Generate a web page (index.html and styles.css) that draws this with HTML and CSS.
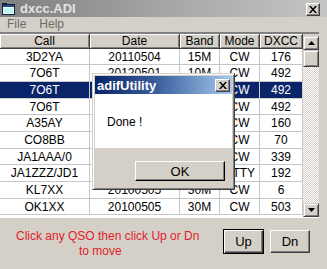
FILE: index.html
```html
<!DOCTYPE html>
<html>
<head>
<meta charset="utf-8">
<link rel="stylesheet" href="styles.css">
</head>
<body>
<div class="window">
  <div class="titlebar">
    <svg class="app-icon" width="13" height="12" viewBox="0 0 13 12">
      <rect x="0.5" y="1.5" width="12" height="10" fill="#e8ffff" stroke="#102040"/>
      <rect x="1" y="2" width="11" height="2" fill="#2a4a7a"/>
      <rect x="0" y="0" width="5" height="2" fill="#102040"/>
      <rect x="2" y="5" width="9" height="5" fill="#bff4f4"/>
    </svg>
    <span class="title">dxcc.ADI</span>
    <span class="win-btn tb-close">
      <svg width="8" height="7" viewBox="0 0 8 7"><path d="M0 0h2l2 2.5L6 0h2L5 3.5 8 7H6L4 4.5 2 7H0l3-3.5z" fill="#000"/></svg>
    </span>
  </div>
  <div class="menubar">
    <span class="menu-item">File</span>
    <span class="menu-item">Help</span>
  </div>
  <div class="gridarea">
    <div class="grid">
      <div class="row head">
        <div class="cell">Call</div><div class="cell">Date</div><div class="cell">Band</div><div class="cell">Mode</div><div class="cell">DXCC</div>
      </div>
      <div class="row"><div class="cell">3D2YA</div><div class="cell">20110504</div><div class="cell">15M</div><div class="cell">CW</div><div class="cell">176</div></div>
      <div class="row"><div class="cell">7O6T</div><div class="cell">20120501</div><div class="cell">10M</div><div class="cell">CW</div><div class="cell">492</div></div>
      <div class="row selected"><div class="cell">7O6T</div><div class="cell">20120501</div><div class="cell">12M</div><div class="cell">CW</div><div class="cell">492</div></div>
      <div class="row"><div class="cell">7O6T</div><div class="cell">20120502</div><div class="cell">15M</div><div class="cell">CW</div><div class="cell">492</div></div>
      <div class="row"><div class="cell">A35AY</div><div class="cell">20110420</div><div class="cell">20M</div><div class="cell">CW</div><div class="cell">160</div></div>
      <div class="row"><div class="cell">CO8BB</div><div class="cell">20100312</div><div class="cell">40M</div><div class="cell">CW</div><div class="cell">70</div></div>
      <div class="row"><div class="cell">JA1AAA/0</div><div class="cell">20100505</div><div class="cell">30M</div><div class="cell">CW</div><div class="cell">339</div></div>
      <div class="row"><div class="cell">JA1ZZZ/JD1</div><div class="cell">20100505</div><div class="cell">20M</div><div class="cell">RTTY</div><div class="cell">192</div></div>
      <div class="row"><div class="cell">KL7XX</div><div class="cell">20100505</div><div class="cell">30M</div><div class="cell">CW</div><div class="cell">6</div></div>
      <div class="row"><div class="cell">OK1XX</div><div class="cell">20100505</div><div class="cell">30M</div><div class="cell">CW</div><div class="cell">503</div></div>
    </div>
    <div class="scrollbar">
      <div class="sb-btn"><svg width="7" height="4" viewBox="0 0 7 4"><path d="M3.5 0L7 4H0z" fill="#000"/></svg></div>
      <div class="sb-thumb"></div>
      <div class="sb-track"></div>
      <div class="sb-btn"><svg width="7" height="4" viewBox="0 0 7 4"><path d="M0 0h7L3.5 4z" fill="#000"/></svg></div>
    </div>
  </div>
  <div class="footer">
    <div class="hint">
      <div class="hint-line">Click any QSO then click Up or Dn</div>
      <div class="hint-line hint-line2">to move</div>
    </div>
    <div class="actions">
      <button class="btn btn-default">Up</button>
      <button class="btn">Dn</button>
    </div>
  </div>
</div>

<div class="dialog">
  <div class="dlg-title">
    <span class="dlg-title-text">adifUtility</span>
    <span class="win-btn dlg-close">
      <svg width="8" height="7" viewBox="0 0 8 7"><path d="M0 0h2l2 2.5L6 0h2L5 3.5 8 7H6L4 4.5 2 7H0l3-3.5z" fill="#000"/></svg>
    </span>
  </div>
  <div class="dlg-body">Done !</div>
  <div class="dlg-foot">
    <button class="btn dlg-ok">OK</button>
  </div>
</div>
</body>
</html>
```

FILE: styles.css
```css
html, body {
  margin: 0;
  padding: 0;
}

body {
  width: 327px;
  height: 269px;
  overflow: hidden;
  position: relative;
  background: #d4d0c8;
  font: 12px "Liberation Sans", Arial, sans-serif;
  color: #000;
}

.window {
  display: flex;
  flex-direction: column;
  height: 269px;
}

.titlebar {
  height: 17px;
  flex: none;
  display: flex;
  align-items: center;
  padding: 0 7px 0 2px;
  background: linear-gradient(90deg, #7f7f7f 0%, #a9a9a9 55%, #c4c4c4 100%);
}

.app-icon {
  flex: none;
  margin-right: 5px;
}

.title {
  flex: 1;
  font-weight: bold;
  font-size: 13px;
  color: #e4e4e4;
  line-height: 15px;
}

.win-btn {
  display: flex;
  align-items: center;
  justify-content: center;
  box-sizing: border-box;
  background: #d4d0c8;
  border: 1px solid;
  border-color: #fff #404040 #404040 #fff;
  box-shadow: inset -1px -1px #808080;
}

.tb-close {
  width: 14px;
  height: 13px;
  margin-top: 1px;
}

.menubar {
  height: 15px;
  flex: none;
  display: flex;
  gap: 13px;
  padding-left: 7px;
  line-height: 15px;
  color: #6a6a6a;
}

.gridarea {
  flex: none;
  display: flex;
  height: 186px;
  box-sizing: border-box;
  border-top: 2px solid #808080;
  border-bottom: 1px solid #fff;
  margin-right: 8px;
}

.grid {
  width: 303px;
  flex: none;
  background: #fff;
  overflow: hidden;
}

.row {
  display: grid;
  grid-template-columns: 90px 90px 40px 40px 43px;
  height: 16.7px;
}

.cell {
  box-sizing: border-box;
  border-right: 1px solid #c6c6c6;
  border-bottom: 1px solid #c6c6c6;
  text-align: center;
  line-height: 16px;
  white-space: nowrap;
  overflow: hidden;
}

.head {
  height: 14.5px;
}

.head .cell {
  background: #d4d0c8;
  border-right: 1px solid #404040;
  border-bottom: 1px solid #404040;
  box-shadow: inset 1px 1px #fff, inset -1px -1px #808080;
  line-height: 14px;
}

.selected .cell {
  background: #0a246a;
  color: #fff;
  border-color: #d0d0d0;
}

.scrollbar {
  width: 16px;
  flex: none;
  display: flex;
  flex-direction: column;
  padding-top: 2px;
  box-sizing: border-box;
  background: #d4d0c8;
}

.sb-btn, .sb-thumb {
  flex: none;
  box-sizing: border-box;
  background: #d4d0c8;
  border: 1px solid;
  border-color: #d4d0c8 #404040 #404040 #d4d0c8;
  box-shadow: inset 1px 1px #fff, inset -1px -1px #808080;
}

.sb-btn {
  height: 14px;
  display: flex;
  align-items: center;
  justify-content: center;
}

.sb-thumb {
  height: 17px;
}

.sb-track {
  flex: 1;
  background: repeating-conic-gradient(#d4d0c8 0 25%, #fff 0 50%) 0 0 / 2px 2px;
}

.footer {
  flex: 1;
  display: flex;
  align-items: flex-start;
  padding: 11px 0 0 16px;
}

.hint {
  flex: none;
  width: 200px;
  color: #e3202a;
  line-height: 15px;
}

.hint-line2 {
  padding-left: 63px;
}

.actions {
  display: flex;
  gap: 6px;
  margin-left: 7px;
  padding-top: 0;
}

.btn {
  box-sizing: border-box;
  font: 13px "Liberation Sans", Arial, sans-serif;
  color: #000;
  background: #d4d0c8;
  border: 1px solid;
  border-color: #fff #404040 #404040 #fff;
  box-shadow: inset -1px -1px #808080, inset 1px 1px #d4d0c8;
  padding: 0;
  width: 40px;
  height: 23px;
  margin-top: 1px;
}

.btn-default {
  width: 41px;
  height: 25px;
  margin-top: 0;
  border: 1px solid #000;
  box-shadow: inset 1px 1px #fff, inset -1px -1px #404040, inset -2px -2px #808080;
}

.dialog {
  position: absolute;
  left: 92px;
  top: 73px;
  width: 143px;
  height: 117px;
  box-sizing: border-box;
  display: flex;
  flex-direction: column;
  background: #d4d0c8;
  border: 1px solid;
  border-color: #d4d0c8 #404040 #404040 #d4d0c8;
  box-shadow: inset 1px 1px #fff, inset -1px -1px #808080;
  padding: 2px;
}

.dlg-title {
  height: 18px;
  flex: none;
  display: flex;
  align-items: center;
  padding: 0 2px 0 2px;
  background: linear-gradient(90deg, #0a246a 0%, #3a5f9c 45%, #a6caf0 100%);
}

.dlg-title-text {
  flex: 1;
  color: #fff;
  font-weight: bold;
  font-size: 13px;
  line-height: 15px;
}

.dlg-close {
  width: 15px;
  height: 13px;
}

.dlg-body {
  flex: none;
  height: 54px;
  box-sizing: border-box;
  background: #fff;
  padding: 21px 0 0 12px;
  line-height: 15px;
}

.dlg-foot {
  flex: 1;
  padding: 13px 0 0 40px;
}

.dlg-ok {
  width: 90px;
  height: 20px;
  margin: 0;
  font-size: 13px;
  border-color: #fff #000 #000 #fff;
  box-shadow: inset -1px -1px #808080;
}
```
